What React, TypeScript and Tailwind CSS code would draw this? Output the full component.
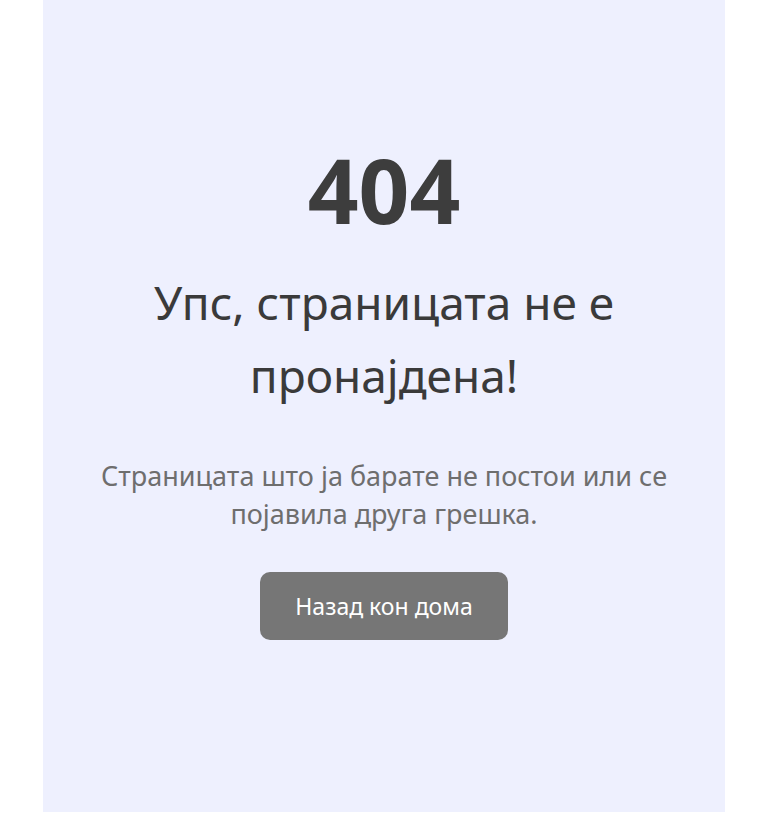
export default function App() {
  return (
    <div className="min-h-[813px] bg-white" style={{ fontFamily: '"Noto Sans", "Open Sans", sans-serif' }}>
      <div className="mx-auto flex min-h-[812px] w-[682px] flex-col items-center bg-[#eef0fe] px-10 pt-[140px] text-center">
        <h1 className="text-[89px] font-bold leading-[100px] text-[#3d3d3d]">404</h1>
        <h2 className="mt-[26px] max-w-[520px] text-[46px] font-normal leading-[73px] text-[#3a3a3a]">
          Упс, страницата не е пронајдена!
        </h2>
        <p className="mt-[45px] max-w-[600px] text-[27px] leading-[38px] text-[#6e6e6e]">
          Страницата што ја барате не постои или се појавила друга грешка.
        </p>
        <button className="mt-[39px] h-[68px] w-[248px] rounded-[10px] bg-[#767676] text-[23px] text-white">
          Назад кон дома
        </button>
      </div>
    </div>
  )
}
